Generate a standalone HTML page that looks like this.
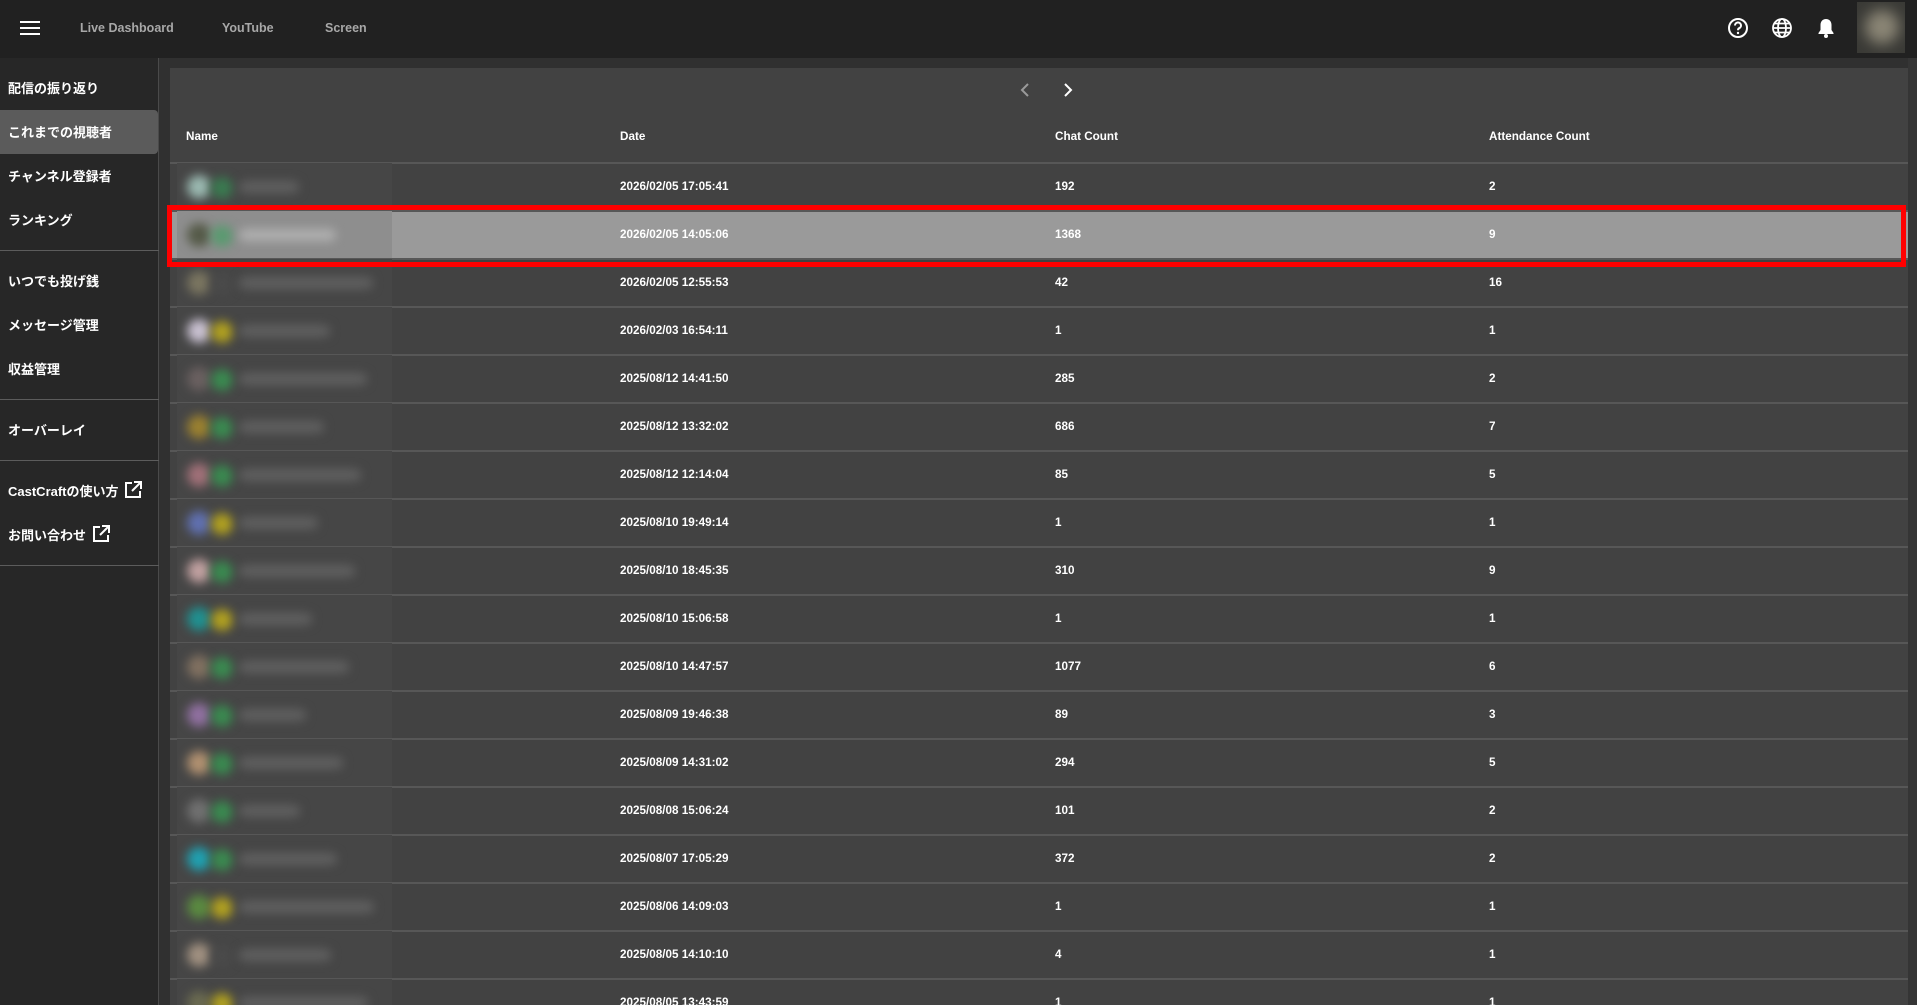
<!DOCTYPE html>
<html><head><meta charset="utf-8"><style>
*{margin:0;padding:0;box-sizing:border-box}
html{overflow:hidden;width:1917px;height:1005px}
body{width:1917px;height:1005px;overflow:hidden;background:#303030;font-family:"Liberation Sans","Noto Sans CJK JP",sans-serif;color:#fff;position:relative}
.top{position:absolute;left:0;top:0;width:1917px;height:58px;background:#212121}
.nav{position:absolute;top:21px;font-size:12.5px;font-weight:bold;color:#a8a8a8}
.side{position:absolute;left:0;top:58px;width:159px;height:947px;background:#272727;border-right:1px solid #4a4a4a}
.si{position:absolute;left:8px;font-size:13px;font-weight:bold;color:#fff}
.div{position:absolute;left:0;width:159px;height:1px;background:#5c5c5c}
.sel{position:absolute;left:0;width:158px;height:44px;background:#5b5b5b;border-radius:0 4px 4px 0}
.card{position:absolute;left:170px;top:68px;width:1738px;height:937px;background:#424242}
.strip{position:absolute;left:1908px;top:58px;width:9px;height:947px;background:#353535}
.th{position:absolute;top:130px;font-size:11.7px;font-weight:bold}
.line{position:absolute;left:170px;width:1738px;height:2px;background:#575757}
.cell{position:absolute;font-size:11.7px;font-weight:bold}
.blur{position:absolute;left:177px;width:215px;height:48px;background:#464646;overflow:hidden}
.av{position:absolute;border-radius:50%;filter:blur(5px)}
.tx{position:absolute;height:12px;border-radius:6px;filter:blur(5px);background:#606060}
</style></head><body>
<div class="top">
 <svg style="position:absolute;left:20px;top:20px" width="20" height="16"><rect y="1" width="20" height="2" fill="#fff"/><rect y="7" width="20" height="2" fill="#fff"/><rect y="13" width="20" height="2" fill="#fff"/></svg>
 <div class="nav" style="left:80px">Live Dashboard</div>
 <div class="nav" style="left:222px">YouTube</div>
 <div class="nav" style="left:325px">Screen</div>
 <svg style="position:absolute;left:1727px;top:17px" width="22" height="22" viewBox="0 0 22 22"><circle cx="11" cy="11" r="9" fill="none" stroke="#fff" stroke-width="2"/><path d="M8 8.5a3 3 0 1 1 4.2 2.7c-.8.4-1.2 1-1.2 2" fill="none" stroke="#fff" stroke-width="2"/><circle cx="11" cy="16" r="1.2" fill="#fff"/></svg>
 <svg style="position:absolute;left:1771px;top:17px" width="22" height="22" viewBox="0 0 22 22"><g fill="none" stroke="#fff" stroke-width="1.8"><circle cx="11" cy="11" r="9"/><ellipse cx="11" cy="11" rx="4" ry="9"/><path d="M2 11h18M3.5 6.5h15M3.5 15.5h15"/></g></svg>
 <svg style="position:absolute;left:1816px;top:17px" width="20" height="22" viewBox="0 0 20 22"><path d="M10 2c-3.5 0-5.5 2.5-5.5 6v5L2.5 16v1h15v-1l-2-3V8c0-3.5-2-6-5.5-6z" fill="#fff"/><circle cx="10" cy="19" r="2" fill="#fff"/></svg>
 <div style="position:absolute;left:1857px;top:2px;width:48px;height:51px;background:#3a3a36;overflow:hidden"><div style="position:absolute;left:8px;top:8px;width:34px;height:34px;border-radius:50%;background:#8a8575;filter:blur(7px)"></div></div>
</div>
<div class="side">
 <div class="sel" style="top:52px"></div>
 <div class="si" style="top:20px">配信の振り返り</div>
 <div class="si" style="top:64px">これまでの視聴者</div>
 <div class="si" style="top:108px">チャンネル登録者</div>
 <div class="si" style="top:152px">ランキング</div>
 <div class="div" style="top:192px"></div>
 <div class="si" style="top:213px">いつでも投げ銭</div>
 <div class="si" style="top:257px">メッセージ管理</div>
 <div class="si" style="top:301px">収益管理</div>
 <div class="div" style="top:341px"></div>
 <div class="si" style="top:362px">オーバーレイ</div>
 <div class="div" style="top:402px"></div>
 <div class="si" style="top:423px">CastCraftの使い方 <svg width="18" height="18" viewBox="0 0 18 18" style="vertical-align:-3px;margin-left:2px"><path d="M8 2H2v14h14v-6" fill="none" stroke="#fff" stroke-width="2"/><path d="M10 1h7v7M17 1L8 10" fill="none" stroke="#fff" stroke-width="2"/></svg></div>
 <div class="si" style="top:467px">お問い合わせ <svg width="18" height="18" viewBox="0 0 18 18" style="vertical-align:-3px;margin-left:2px"><path d="M8 2H2v14h14v-6" fill="none" stroke="#fff" stroke-width="2"/><path d="M10 1h7v7M17 1L8 10" fill="none" stroke="#fff" stroke-width="2"/></svg></div>
 <div class="div" style="top:507px"></div>
</div>
<div class="strip"></div>
<div class="card"></div>
<svg style="position:absolute;left:1019px;top:83px" width="12" height="14"><path d="M9 1L3 7l6 6" fill="none" stroke="#9a9a9a" stroke-width="2"/></svg>
<svg style="position:absolute;left:1062px;top:83px" width="12" height="14"><path d="M3 1l6 6-6 6" fill="none" stroke="#fff" stroke-width="2"/></svg>
<div class="th" style="left:186px">Name</div>
<div class="th" style="left:620px">Date</div>
<div class="th" style="left:1055px">Chat Count</div>
<div class="th" style="left:1489px">Attendance Count</div>
<div id="rows"></div>
<script>
var d=[["2026/02/05 17:05:41",192,2,"#9ab8b0","#3a7a50"],["2026/02/05 14:05:06",1368,9,"#555a48","#5a9a70"],["2026/02/05 12:55:53",42,16,"#7a7560","#4a4a4a"],["2026/02/03 16:54:11",1,1,"#c8c0d0","#b0a020"],["2025/08/12 14:41:50",285,2,"#6a6060","#3a8a50"],["2025/08/12 13:32:02",686,7,"#9a8030","#3a8a50"],["2025/08/12 12:14:04",85,5,"#a07078","#3a8a50"],["2025/08/10 19:49:14",1,1,"#6070b0","#b0a020"],["2025/08/10 18:45:35",310,9,"#c0a0a0","#3a8a50"],["2025/08/10 15:06:58",1,1,"#209090","#b0a020"],["2025/08/10 14:47:57",1077,6,"#807060","#3a8a50"],["2025/08/09 19:46:38",89,3,"#9070a0","#3a8a50"],["2025/08/09 14:31:02",294,5,"#b09070","#3a8a50"],["2025/08/08 15:06:24",101,2,"#707070","#3a8a50"],["2025/08/07 17:05:29",372,2,"#20a0b0","#3a8a50"],["2025/08/06 14:09:03",1,1,"#5a8a40","#b0a020"],["2025/08/05 14:10:10",4,1,"#a09080","#4a4a4a"],["2025/08/05 13:43:59",1,1,"#6a6a50","#b0a020"]];
var h='<div class="line" style="top:162px"></div>';
d.forEach(function(r,i){var t=163+i*48;var hl=i==1;
if(hl)h+='<div style="position:absolute;left:170px;top:'+(t+1)+'px;width:1738px;height:46px;background:#9a9a9a"></div>';
h+='<div class="blur" style="top:'+t+'px;height:'+Math.min(48,1005-t)+'px;background:'+(hl?'#8e8e8e':'#464646')+'"><div class="av" style="left:10px;top:12px;width:24px;height:24px;background:'+r[3]+'"></div><div class="av" style="left:34px;top:14px;width:22px;height:22px;background:'+r[4]+'"></div><div class="tx" style="left:62px;top:18px;width:'+(60+(i*37)%80)+'px;'+(hl?'background:#b0b0b0':'')+'"></div></div>';
var c=t+17;
h+='<div class="cell" style="left:620px;top:'+c+'px">'+r[0]+'</div><div class="cell" style="left:1055px;top:'+c+'px">'+r[1]+'</div><div class="cell" style="left:1489px;top:'+c+'px">'+r[2]+'</div>';
if(t+47<1005)h+='<div class="line" style="top:'+(t+47)+'px"></div>';});
h+='<div style="position:absolute;left:167px;top:205px;width:1739px;height:62px;border:5px solid #f00"></div>';
document.getElementById('rows').innerHTML=h;
</script>
</body></html>
